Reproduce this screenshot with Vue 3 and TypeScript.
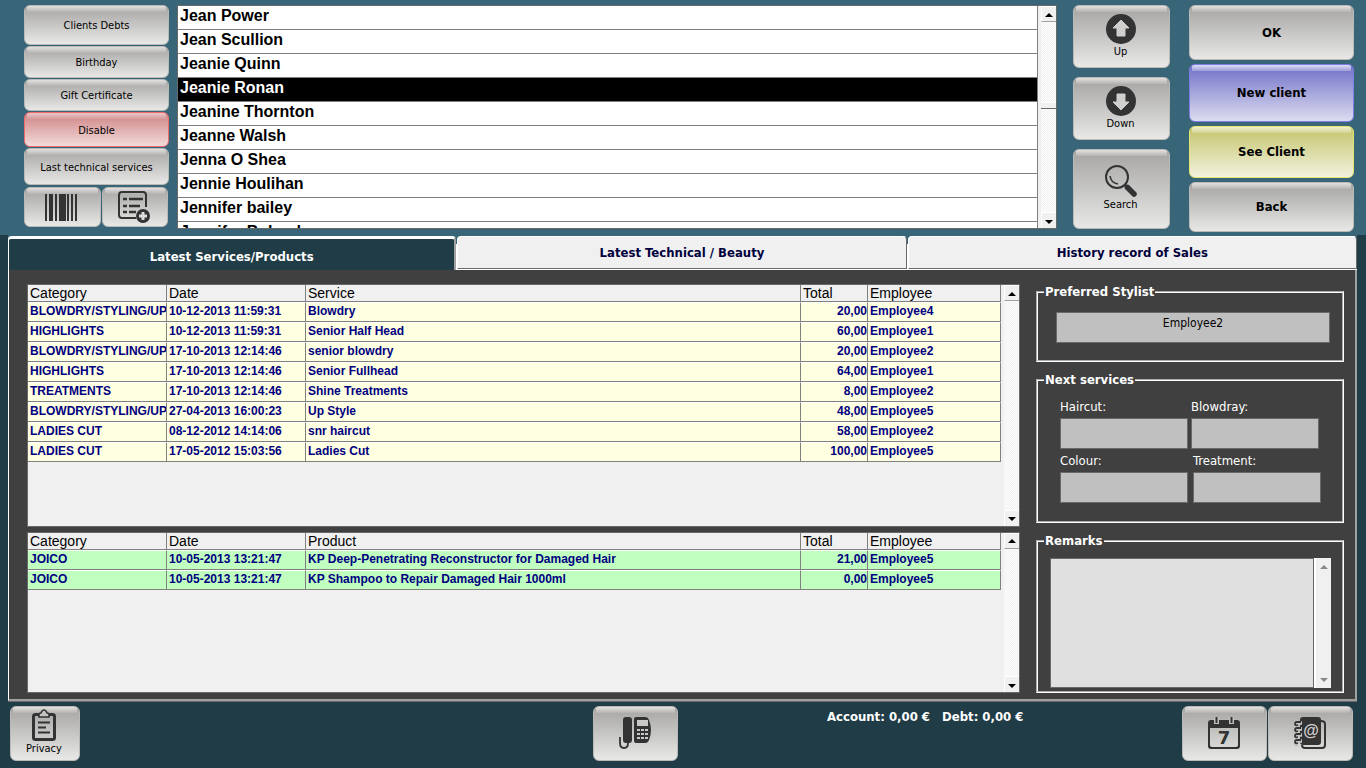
<script setup lang="ts">
import { ref } from 'vue'

interface Sale {
  category: string
  date: string
  item: string
  total: string
  employee: string
}

interface Grid {
  id: string
  itemLabel: string
  rows: Sale[]
}

const sideButtons = [
  { label: 'Clients Debts', kind: 'h40' },
  { label: 'Birthday', kind: 'h32' },
  { label: 'Gift Certificate', kind: 'h32' },
  { label: 'Disable', kind: 'h35 red' },
  { label: 'Last technical services', kind: 'h37' },
]

const clients = [
  'Jean Power',
  'Jean Scullion',
  'Jeanie Quinn',
  'Jeanie Ronan',
  'Jeanine Thornton',
  'Jeanne Walsh',
  'Jenna O Shea',
  'Jennie Houlihan',
  'Jennifer bailey',
  'Jennifer Boland',
]
const selected = ref('Jeanie Ronan')

const actions = [
  { label: 'OK', kind: 'h55' },
  { label: 'New client', kind: 'h58 violet' },
  { label: 'See Client', kind: 'h52 yellow' },
  { label: 'Back', kind: 'h50' },
]

const tabs = ['Latest Services/Products', 'Latest Technical / Beauty', 'History record of Sales']
const activeTab = ref(0)

const sale = (category: string, date: string, item: string, total: string, employee: string): Sale => ({
  category,
  date,
  item,
  total,
  employee,
})

const grids: Grid[] = [
  {
    id: 'services',
    itemLabel: 'Service',
    rows: [
      sale('BLOWDRY/STYLING/UPS', '10-12-2013 11:59:31', 'Blowdry', '20,00', 'Employee4'),
      sale('HIGHLIGHTS', '10-12-2013 11:59:31', 'Senior Half Head', '60,00', 'Employee1'),
      sale('BLOWDRY/STYLING/UPS', '17-10-2013 12:14:46', 'senior blowdry', '20,00', 'Employee2'),
      sale('HIGHLIGHTS', '17-10-2013 12:14:46', 'Senior Fullhead', '64,00', 'Employee1'),
      sale('TREATMENTS', '17-10-2013 12:14:46', 'Shine Treatments', '8,00', 'Employee2'),
      sale('BLOWDRY/STYLING/UPS', '27-04-2013 16:00:23', 'Up Style', '48,00', 'Employee5'),
      sale('LADIES CUT', '08-12-2012 14:14:06', 'snr haircut', '58,00', 'Employee2'),
      sale('LADIES CUT', '17-05-2012 15:03:56', 'Ladies Cut', '100,00', 'Employee5'),
    ],
  },
  {
    id: 'products',
    itemLabel: 'Product',
    rows: [
      sale('JOICO', '10-05-2013 13:21:47', 'KP Deep-Penetrating Reconstructor for Damaged Hair', '21,00', 'Employee5'),
      sale('JOICO', '10-05-2013 13:21:47', 'KP Shampoo to Repair Damaged Hair 1000ml', '0,00', 'Employee5'),
    ],
  },
]

const nextServices = [
  [
    { id: 'haircut', label: 'Haircut:' },
    { id: 'blowdry', label: 'Blowdray:' },
  ],
  [
    { id: 'colour', label: 'Colour:' },
    { id: 'treatment', label: 'Treatment:' },
  ],
]
</script>

<template>
  <div class="app">
    <header class="top">
      <div class="side">
        <button v-for="b in sideButtons" :key="b.label" type="button" class="btn text" :class="b.kind">{{ b.label }}</button>
        <div class="side-icons">
          <button type="button" class="btn h40 barcode" aria-label="Barcode">
            <svg width="32" height="27" viewBox="0 0 32 27" fill="#333">
              <path d="M0 0h2v27H0zM4 0h4v27H4zM10 0h2v27h-2zM14 0h7v27h-7zM22 0h2v27h-2zM26 0h2v27h-2zM30 0h2v27h-2z" />
            </svg>
          </button>
          <button type="button" class="btn h40 form" aria-label="Add form">
            <svg width="32" height="32" viewBox="0 0 32 32" fill="none" stroke="#333" stroke-width="2">
              <path d="M18 27H4q-3 0-3-3V4q0-3 3-3h21q3 0 3 3v12" />
              <path d="M5 8h4M5 15h4M5 21h4M11 8h14M11 15h11M11 21h7" stroke-width="2.6" />
              <circle cx="25" cy="25" r="7" fill="#333" stroke="none" />
              <path d="M25 21v8M21 25h8" stroke="#ddd" stroke-width="3" />
            </svg>
          </button>
        </div>
      </div>

      <div class="clients">
        <ul class="client-list" role="listbox" aria-label="Clients">
          <li
            v-for="c in clients"
            :key="c"
            role="option"
            :aria-selected="c === selected"
            :class="{ on: c === selected }"
            @click="selected = c"
          >
            {{ c }}
          </li>
        </ul>
        <div class="scroll">
          <button type="button" class="arrow" aria-label="Scroll up"><i class="tri up"></i></button>
          <div class="track before"></div>
          <div class="thumb"></div>
          <div class="track after"></div>
          <button type="button" class="arrow" aria-label="Scroll down"><i class="tri down"></i></button>
        </div>
      </div>

      <nav class="nav">
        <button type="button" class="btn h63">
          <svg width="30" height="30" viewBox="0 0 30 30">
            <circle cx="15" cy="15" r="15" fill="#333" />
            <path d="M15 6l8 8h-4v8h-8v-8H7z" fill="#d0cfce" stroke="#d0cfce" stroke-linejoin="round" />
          </svg>
          <span>Up</span>
        </button>
        <button type="button" class="btn h63">
          <svg width="30" height="30" viewBox="0 0 30 30">
            <circle cx="15" cy="15" r="15" fill="#333" />
            <path d="M15 24l-8-8h4V8h8v8h4z" fill="#d0cfce" stroke="#d0cfce" stroke-linejoin="round" />
          </svg>
          <span>Down</span>
        </button>
        <button type="button" class="btn h80">
          <svg width="32" height="32" viewBox="0 0 32 32" fill="none" stroke="#333">
            <circle cx="12" cy="12" r="11" stroke-width="2" />
            <path d="M5 11q1 7 8 8" stroke-width="1.6" />
            <path d="M19.500 19.500l3 3" stroke-width="2.500" />
            <path d="M22.500 22.500l6.500 6.500" stroke-width="5.500" stroke-linecap="round" />
          </svg>
          <span>Search</span>
        </button>
      </nav>

      <div class="actions">
        <button v-for="a in actions" :key="a.label" type="button" class="btn bold" :class="a.kind">{{ a.label }}</button>
      </div>
    </header>

    <main class="book">
      <div class="tabs" role="tablist">
        <button
          v-for="(t, i) in tabs"
          :key="t"
          type="button"
          role="tab"
          class="tab"
          :class="{ active: i === activeTab }"
          :aria-selected="i === activeTab"
          @click="activeTab = i"
        >
          {{ t }}
        </button>
      </div>

      <div class="panel">
        <div class="grids">
          <div v-for="g in grids" :key="g.id" class="grid" :class="g.id">
            <div class="grid-body">
              <table>
                <colgroup>
                  <col class="c-cat" />
                  <col class="c-date" />
                  <col />
                  <col class="c-total" />
                  <col class="c-emp" />
                </colgroup>
                <thead>
                  <tr>
                    <th>Category</th>
                    <th>Date</th>
                    <th>{{ g.itemLabel }}</th>
                    <th>Total</th>
                    <th>Employee</th>
                  </tr>
                </thead>
                <tbody>
                  <tr v-for="(r, i) in g.rows" :key="i">
                    <td>{{ r.category }}</td>
                    <td>{{ r.date }}</td>
                    <td>{{ r.item }}</td>
                    <td class="num">{{ r.total }}</td>
                    <td>{{ r.employee }}</td>
                  </tr>
                </tbody>
              </table>
            </div>
            <div class="scroll">
              <button type="button" class="arrow" aria-label="Scroll up"><i class="tri up"></i></button>
              <div class="track after"></div>
              <button type="button" class="arrow" aria-label="Scroll down"><i class="tri down"></i></button>
            </div>
          </div>
        </div>

        <aside class="info">
          <fieldset class="stylist">
            <legend>Preferred Stylist</legend>
            <input type="text" value="Employee2" aria-label="Preferred Stylist" />
          </fieldset>
          <fieldset class="next">
            <legend>Next services</legend>
            <div v-for="(row, i) in nextServices" :key="i" class="next-row">
              <div v-for="f in row" :key="f.id" class="field">
                <label :for="f.id">{{ f.label }}</label>
                <input :id="f.id" type="text" />
              </div>
            </div>
          </fieldset>
          <fieldset class="remarks">
            <legend>Remarks</legend>
            <div class="remarks-box">
              <textarea aria-label="Remarks"></textarea>
              <div class="soft-scroll">
                <button type="button" disabled aria-label="Scroll up"><i class="tri up"></i></button>
                <button type="button" disabled aria-label="Scroll down"><i class="tri down"></i></button>
              </div>
            </div>
          </fieldset>
        </aside>
      </div>
    </main>

    <footer class="bottom">
      <div>
        <button type="button" class="btn h55 privacy">
          <svg width="24" height="32" viewBox="0 0 24 32" fill="none" stroke="#333">
            <rect x="1.500" y="5.500" width="21" height="25" rx="2" stroke-width="3" />
            <path d="M7 8V5q0-1 2-1 1-3 3-3t3 3q2 0 2 1v3z" fill="#c4c3c2" stroke-width="1.600" />
            <path d="M6 13.500h12M6 18.500h8M6 23.500h12" stroke-width="2" />
          </svg>
          <span>Privacy</span>
        </button>
      </div>
      <div>
        <button type="button" class="btn h55 phone" aria-label="Phone">
          <svg width="32" height="32" viewBox="0 0 32 32" fill="#333">
            <rect x="4" y="0" width="9" height="26" rx="3" />
            <path d="M1 20v6q0 5 4 5t4-5" fill="none" stroke="#333" stroke-width="1.800" />
            <path d="M17 0h9q3 0 4 3 2 5 2 10t-2 10q-1 3-4 3h-9q-2 0-2-2V2q0-2 2-2z" />
            <path d="M18 3h11v6H18zM18 12h3v2h-3zM22 12h3v2h-3zM26 12h3v2h-3zM18 16h3v2h-3zM22 16h3v2h-3zM26 16h3v2h-3zM18 20h3v2h-3zM22 20h3v2h-3zM26 20h3v2h-3z" fill="#c9c8c7" />
          </svg>
        </button>
      </div>
      <p class="balance"><span>Account: 0,00 €</span><span>Debt: 0,00 €</span></p>
      <div class="bottom-right">
        <button type="button" class="btn h55" aria-label="Calendar">
          <svg width="32" height="32" viewBox="0 0 32 32">
            <path d="M3 3h26q3 0 3 3v23q0 3-3 3H3q-3 0-3-3V6q0-3 3-3zM2 11v17q0 2 2 2h24q2 0 2-2V11z" fill="#333" fill-rule="evenodd" />
            <path d="M8.500 0v7M23.500 0v7" stroke="#c0bfbe" stroke-width="5" />
            <path d="M8.500 0v6M23.500 0v6" stroke="#333" stroke-width="2" />
            <text x="16" y="27" text-anchor="middle" class="seven">7</text>
          </svg>
        </button>
        <button type="button" class="btn h55" aria-label="Address book">
          <svg width="32" height="32" viewBox="0 0 32 32">
            <path d="M27 4q4 0 4 3v21q0 3-3 3H11q-3 0-3-3" fill="none" stroke="#333" stroke-width="2" />
            <path d="M9 0h15q3 0 3 3v22q0 3-3 3H9q-3 0-3-3V3q0-3 3-3z" fill="#333" />
            <path d="M8 6H3q-2 0-2 2t3 1M8 12H3q-2 0-2 2t3 1M8 18H3q-2 0-2 2t3 1M8 24H3q-2 0-2 2t3 1" fill="none" stroke="#c4c3c2" stroke-width="3.600" />
            <path d="M7 5H3q-2 0-2 2t3 1M7 11H3q-2 0-2 2t3 1M7 17H3q-2 0-2 2t3 1M7 23H3q-2 0-2 2t3 1" fill="none" stroke="#333" stroke-width="1.800" />
            <text x="17" y="19" text-anchor="middle" class="at">@</text>
          </svg>
        </button>
      </div>
    </footer>
  </div>
</template>

<style>
body {
  margin: 0;
  background: #203c46;
}
</style>

<style scoped>
.app {
  --ui: Tahoma, "DejaVu Sans Condensed", "Noto Sans", sans-serif;
  --grid: "Liberation Sans", Arial, sans-serif;
  min-height: 100vh;
  display: flex;
  flex-direction: column;
  box-sizing: border-box;
  background: #203c46;
  font-family: var(--ui);
  font-size: 11px;
  color: #000;
}
.app * {
  box-sizing: border-box;
}
button,
input,
textarea {
  font: inherit;
  color: inherit;
  margin: 0;
  padding: 0;
}

.btn {
  --hi: #e2e1df;
  --mid: #b4b3b1;
  --from: #a5a4a2;
  --to: #e8e8e6;
  --edge: #bab9b5;
  display: flex;
  flex-direction: column;
  align-items: center;
  justify-content: center;
  padding: 0 2px 0 0;
  border: 1px solid var(--edge);
  border-radius: 6px;
  background:
    linear-gradient(var(--hi), var(--mid)) 2px 0 / calc(100% - 4px) 6px no-repeat,
    linear-gradient(var(--from), var(--to));
  line-height: 16px;
  white-space: nowrap;
}
.text {
  padding: 2px 0 0;
}
.bold {
  padding: 0;
  font-size: 13px;
  font-weight: 700;
}
.red {
  --hi: #ecc6c6;
  --mid: #d49a9a;
  --from: #cf8484;
  --to: #f2dada;
  --edge: #ef6a6a;
}
.violet {
  --hi: #dcdcf4;
  --mid: #9c9cdc;
  --from: #7070c8;
  --to: #dcdcf0;
  --edge: #7c7ce4;
}
.yellow {
  --hi: #f0f0d0;
  --mid: #d2d292;
  --from: #c4c46c;
  --to: #f2f2de;
  --edge: #e4e470;
}
.h32 { height: 32px; }
.h35 { height: 35px; }
.h37 { height: 37px; }
.h40 { height: 40px; }
.h50 { height: 50px; }
.h52 { height: 52px; }
.h55 { height: 55px; }
.h58 { height: 58px; }
.h63 { height: 63px; }
.h80 { height: 80px; }

.top {
  display: flex;
  height: 235px;
  padding: 5px 12px 0 24px;
  background: #386577;
}
.side {
  width: 145px;
  display: flex;
  flex-direction: column;
  gap: 1px;
  margin-right: 8px;
}
.side-icons {
  display: flex;
  gap: 1px;
  padding: 1px 1px 0 0;
}
.barcode {
  flex: 77;
}
.form {
  flex: 66;
}

.clients {
  flex: 1;
  height: 224px;
  display: flex;
  border: 1px solid #696969;
  background: #f0f0f0;
  overflow: hidden;
}
.client-list {
  flex: 1;
  margin: 0 3px 0 0;
  padding: 0;
  list-style: none;
  border-right: 1px solid #808080;
  background: #fff;
  font: 700 16px/19px var(--grid);
}
.client-list li {
  height: 24px;
  padding-left: 2px;
  border-bottom: 1px solid #808080;
  cursor: default;
}
.client-list li.on {
  background: #000;
  color: #fff;
}

.scroll {
  width: 15px;
  display: flex;
  flex-direction: column;
}
.track {
  background: repeating-conic-gradient(#fff 0 25%, #f0f0f0 0 50%) 0 0 / 2px 2px;
}
.before {
  height: 80px;
}
.after {
  flex: 1;
}
.thumb {
  height: 7px;
  background: #f0f0f0;
  border-top: 1px solid #fff;
  border-bottom: 1px solid #696969;
}
.arrow {
  height: 16px;
  display: flex;
  align-items: center;
  justify-content: center;
  border: 0;
  border-left: 1px solid #fff;
  border-top: 1px solid #fff;
  border-bottom: 1px solid #a0a0a0;
  background: #f0f0f0;
  padding-top: 1px;
}
.after + .arrow {
  border-bottom: 0;
  padding-top: 2px;
}
.tri {
  width: 0;
  height: 0;
  border: 4px solid transparent;
}
.tri.up {
  border-top: 0;
  border-bottom-color: #000;
}
.tri.down {
  border-bottom: 0;
  border-top-color: #000;
}

.nav {
  width: 97px;
  display: flex;
  flex-direction: column;
  gap: 9px;
  margin: 0 19px 0 16px;
}
.actions {
  width: 165px;
  display: flex;
  flex-direction: column;
  gap: 4px;
}

.book {
  flex: 1;
  display: flex;
  flex-direction: column;
  margin: 0 9px 0 8px;
  border-bottom: 1px solid #696969;
}
.tabs {
  display: flex;
  height: 35px;
  gap: 1px;
  padding-top: 1px;
  background: linear-gradient(#386577 0 9px, #fff 9px);
}
.tab {
  flex: 450;
  border: 1px solid #696969;
  border-top-color: #fff;
  border-left-color: #fff;
  border-radius: 4px 4px 0 0;
  background: #f0f0f0;
  color: #00003c;
  font-size: 13px;
  font-weight: 700;
  line-height: 16px;
  margin-bottom: 1px;
}
.tab.active {
  flex: 448;
  border-top: 3px solid #fff;
  border-right: 2px solid #a0a0a0;
  border-bottom: 0;
  background: #203c46;
  color: #fff;
  padding: 4px 0 0;
  margin-bottom: 0;
}
.panel {
  flex: 1;
  display: flex;
  gap: 16px;
  padding: 14px 11px 6px 18px;
  background: #404040;
  border-left: 1px solid #fff;
  border-right: 2px solid #a0a0a0;
  border-bottom: 2px solid #a0a0a0;
}
.grids {
  flex: 1;
  display: flex;
  flex-direction: column;
  gap: 5px;
  min-width: 0;
}
.grid {
  display: flex;
  border: 1px solid #696969;
  background: #f0f0f0;
  overflow: hidden;
}
.grid.services {
  flex: 243 0 0;
}
.grid.products {
  flex: 161 0 0;
}
.grid-body {
  flex: 1;
  margin-right: 3px;
}
table {
  width: 100%;
  table-layout: fixed;
  border-collapse: separate;
  border-spacing: 0;
  font-family: var(--grid);
}
.c-cat,
.c-date {
  width: 139px;
}
.c-total {
  width: 67px;
}
.c-emp {
  width: 133px;
}
th {
  height: 17px;
  padding: 0 0 0 2px;
  border-right: 1px solid #808080;
  border-bottom: 1px solid #808080;
  text-align: left;
  font-size: 14px;
  font-weight: 400;
  line-height: 16px;
}
td {
  height: 20px;
  padding: 0 0 2px 2px;
  border-top: 1px solid #fff;
  border-right: 1px solid #808080;
  border-bottom: 1px solid #808080;
  background: #ffffe1;
  color: #000080;
  font-size: 12px;
  font-weight: 700;
  line-height: 16px;
  overflow: hidden;
  white-space: nowrap;
}
.products td {
  background: #c0ffc0;
}
td.num {
  padding: 0 0 2px;
  text-align: right;
}

.info {
  width: 308px;
  display: flex;
  flex-direction: column;
  gap: 10px;
}
fieldset {
  margin: 0;
  border: 2px groove #fff;
  min-width: 0;
}
legend {
  padding: 0 1px;
  margin: 0;
  color: #fff;
  font-size: 13px;
  font-weight: 700;
  line-height: 16px;
}
.info input {
  height: 31px;
  border: 1px solid #696969;
  border-radius: 0;
  background: #c0c0c0;
  font-size: 12px;
}
.stylist {
  height: 78px;
  padding: 12px 12px 0 6px;
}
.info .stylist input {
  display: block;
  width: calc(100% - 12px);
  margin-left: 12px;
  padding-bottom: 10px;
  text-align: center;
}
.next {
  height: 151px;
  padding: 11px 20px 0 6px;
}
.next-row {
  display: flex;
  gap: 3px;
  padding-left: 16px;
  margin-bottom: 4px;
}
.next-row + .next-row {
  gap: 5px;
}
.field {
  width: 128px;
  display: flex;
  flex-direction: column;
}
.field label {
  color: #fff;
  font-size: 13px;
  line-height: 16px;
  margin-bottom: 3px;
}
.remarks {
  flex: 1;
  padding: 9px 11px 3px 6px;
  display: flex;
}
.remarks-box {
  flex: 1;
  height: 100%;
  min-height: 128px;
  display: flex;
  margin-left: 6px;
}
textarea {
  flex: 1;
  min-width: 0;
  border: 1px solid #696969;
  border-radius: 0;
  background: #e0e0e0;
  resize: none;
}
.soft-scroll {
  width: 17px;
  display: flex;
  flex-direction: column;
  justify-content: space-between;
  border-left: 2px solid #fff;
  background: #f0f0f0;
}
.soft-scroll button {
  height: 17px;
  display: flex;
  align-items: center;
  justify-content: center;
  border: 0;
  background: none;
}
.soft-scroll .up {
  border-top: 0;
  border-bottom-color: #888;
}
.soft-scroll .down {
  border-bottom: 0;
  border-top-color: #888;
}

.bottom {
  height: 66px;
  display: grid;
  grid-template-columns: 583fr 234fr 355fr 171px;
  align-items: start;
  padding: 4px 13px 0 10px;
}
.bottom .btn {
  padding-bottom: 1px;
}
.privacy {
  width: 70px;
}
.phone {
  width: 85px;
}
.balance {
  display: flex;
  gap: 12px;
  margin: 3px 0 0;
  color: #fff;
  font-size: 13px;
  font-weight: 700;
  line-height: 16px;
}
.bottom-right {
  display: flex;
  gap: 1px;
}
.bottom-right .btn {
  flex: 1;
}
.seven {
  font: 700 18px "DejaVu Sans", sans-serif;
  fill: #333;
}
.at {
  font: 700 16px "Liberation Sans", sans-serif;
  fill: #d0cfce;
}
</style>
